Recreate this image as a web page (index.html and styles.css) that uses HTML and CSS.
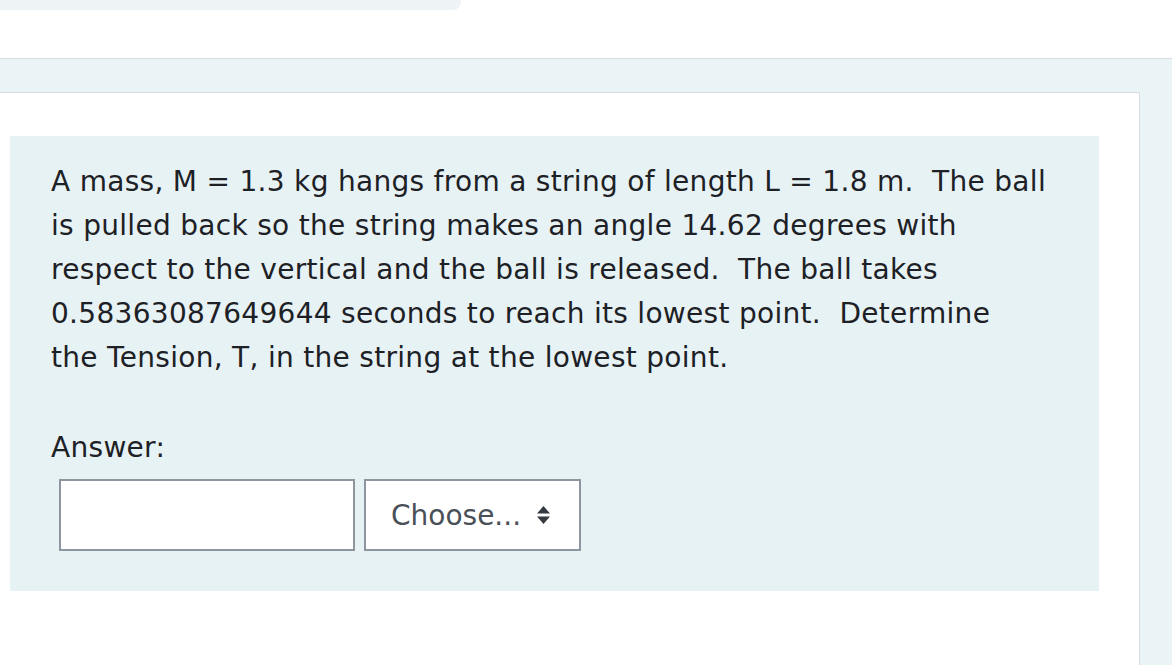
FILE: index.html
```html
<!DOCTYPE html>
<html>
<head>
<meta charset="utf-8">
<link rel="stylesheet" href="styles.css">
</head>
<body>
<div class="tabstrip"></div>
<div class="page">
  <div class="panel">
    <div class="question">
      <p class="qtext">A mass, M = 1.3 kg hangs from a string of length L = 1.8 m.&nbsp; The ball<br>is pulled back so the string makes an angle 14.62 degrees with<br>respect to the vertical and the ball is released.&nbsp; The ball takes<br>0.58363087649644 seconds to reach its lowest point.&nbsp; Determine<br>the Tension, T, in the string at the lowest point.</p>
      <div class="answer-label">Answer:</div>
      <div class="answer-row">
        <div class="answer-input"></div>
        <div class="unit-select">
          <span>Choose...</span>
          <svg class="updown" width="13" height="20" viewBox="0 0 13 20"><path d="M6.5 1 L13 8.5 H0 Z M6.5 19 L13 11.5 H0 Z" fill="#343a40"/></svg>
        </div>
      </div>
    </div>
  </div>
</div>
</body>
</html>
```
FILE: styles.css
```css
html, body {
  margin: 0;
  padding: 0;
  background: #ffffff;
  height: 100%;
  overflow: hidden;
}
body {
  font-family: "DejaVu Sans", "Noto Sans", sans-serif;
  color: #1d2125;
}
.tabstrip {
  width: 461px;
  height: 10px;
  background: #eef3f6;
  border-bottom-right-radius: 8px;
}
.page {
  margin-top: 48px;
  border-top: 1px solid #d8dde1;
  background: #eaf3f6;
  padding-top: 33px;
  height: 600px;
  overflow: hidden;
}
.panel {
  width: 1140px;
  background: #ffffff;
  border-top: 1px solid #d8dde1;
  border-right: 1px solid #d8dde1;
  padding: 43px 0 0 10px;
  box-sizing: border-box;
  height: 600px;
}
.question {
  width: 1089px;
  height: 455px;
  background: #e7f2f5;
  box-sizing: border-box;
  padding: 24px 0 0 41px;
}
.qtext {
  margin: 0;
  font-size: 28px;
  letter-spacing: 0.3px;
  line-height: 44px;
  white-space: nowrap;
}
.answer-label {
  margin-top: 46px;
  font-size: 28px;
  letter-spacing: 0.3px;
  line-height: 44px;
}
.answer-row {
  display: flex;
  gap: 9px;
  margin-top: 9px;
  padding-left: 8px;
}
.answer-input {
  width: 296px;
  height: 72px;
  box-sizing: border-box;
  border: 2px solid #8f959e;
  background: #ffffff;
}
.unit-select {
  width: 217px;
  height: 72px;
  box-sizing: border-box;
  border: 2px solid #8f959e;
  background: #ffffff;
  display: flex;
  align-items: center;
  padding-left: 25px;
  font-size: 28px;
  color: #495057;
}
.updown {
  margin-left: 16px;
}
```
